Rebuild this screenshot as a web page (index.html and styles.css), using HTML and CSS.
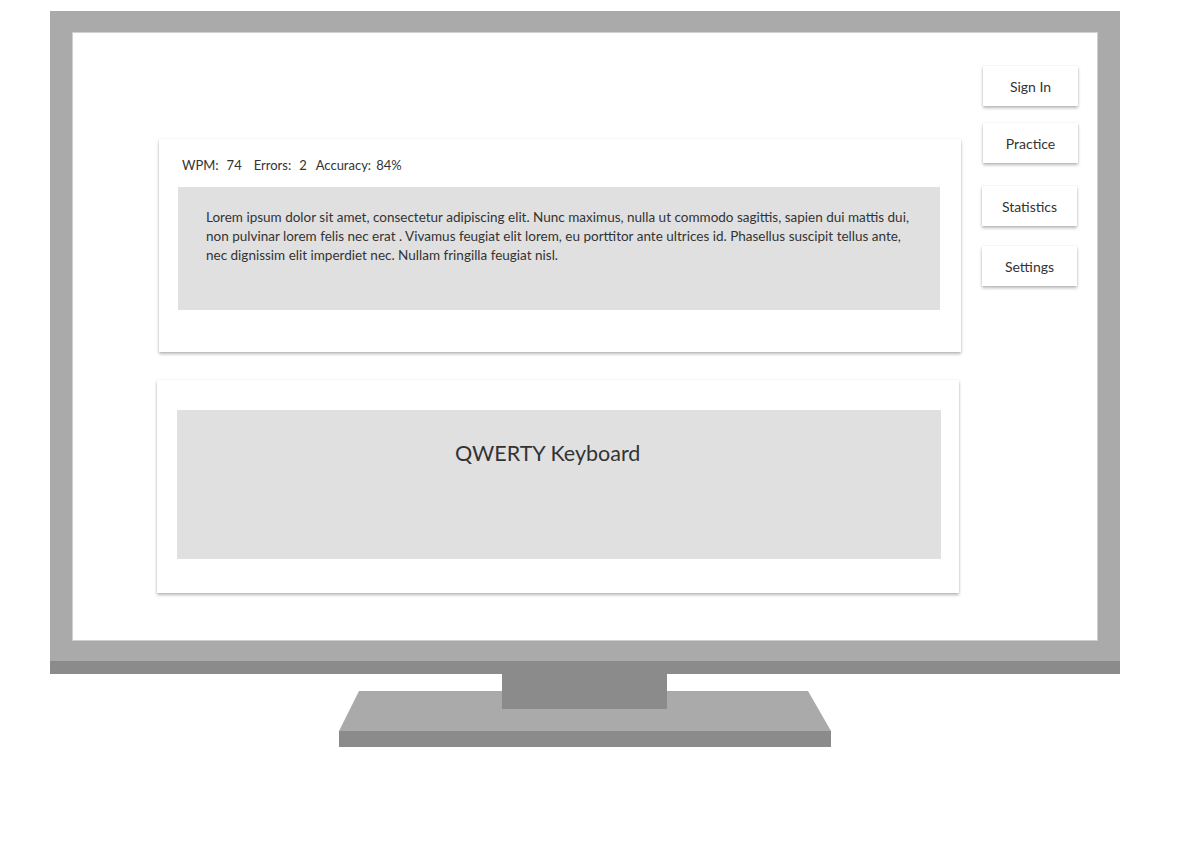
FILE: index.html
```html
<!DOCTYPE html>
<html>
<head>
<meta charset="utf-8">
<link rel="stylesheet" href="styles.css">
</head>
<body>
<div class="monitor">
  <div class="screen">
    <div class="main">
      <section class="card card-text">
        <div class="stats">
          <span class="label">WPM:</span><span class="value">74</span>
          <span class="label">Errors:</span><span class="value">2</span>
          <span class="label">Accuracy:</span><span class="value">84%</span>
        </div>
        <div class="passage">Lorem ipsum dolor sit amet, consectetur adipiscing elit. Nunc maximus, nulla ut commodo sagittis, sapien dui mattis dui, non pulvinar lorem felis nec erat . Vivamus feugiat elit lorem, eu porttitor ante ultrices id. Phasellus suscipit tellus ante, nec dignissim elit imperdiet nec. Nullam fringilla feugiat nisl.</div>
      </section>
      <section class="card card-keys">
        <div class="keyboard">QWERTY Keyboard</div>
      </section>
    </div>
    <nav class="nav">
      <div class="btn">Sign In</div>
      <div class="btn">Practice</div>
      <div class="btn">Statistics</div>
      <div class="btn">Settings</div>
    </nav>
  </div>
</div>
<svg class="stand" width="492" height="74" viewBox="0 0 492 74">
  <polygon points="20,17 469,17 492,57 0,57" fill="#aaaaaa"/>
  <rect x="0" y="57" width="492" height="16" fill="#8b8b8b"/>
  <rect x="163" y="0" width="165" height="35" fill="#8b8b8b"/>
</svg>
</body>
</html>
```
FILE: styles.css
```css
html, body {
  margin: 0;
  padding: 0;
  background: #ffffff;
  font-family: "Lato", "Liberation Sans", sans-serif;
  color: #333333;
}

.monitor {
  margin: 11px 0 0 50px;
  width: 1070px;
  box-sizing: border-box;
  background: #aaaaaa;
  padding: 22px 23px 21px 23px;
  border-bottom: 13px solid #8b8b8b;
}

.screen {
  height: 607px;
  background: #ffffff;
  box-shadow: 0 0 0 1px #cfcfcf;
  display: flex;
  align-items: flex-start;
}

.main {
  padding: 106px 0 0 84px;
  display: flex;
  flex-direction: column;
}

.card {
  background: #ffffff;
  width: 802px;
  box-sizing: border-box;
  box-shadow: 0 2px 3px rgba(0, 0, 0, 0.28), 0 0 2px rgba(0, 0, 0, 0.08);
}

.card-text {
  margin-left: 2px;
  height: 213px;
  padding: 17px 21px 0 19px;
}

.stats {
  display: flex;
  align-items: center;
  height: 18px;
  font-size: 13px;
  padding-left: 4px;
  margin-bottom: 13px;
}

.stats .label {
  margin-right: 8px;
}

.stats .label:nth-of-type(5) {
  margin-right: 5px;
}

.stats .value {
  margin-right: 12px;
}

.stats .value:nth-of-type(4) {
  margin-right: 9px;
}

.passage {
  background: #e0e0e0;
  height: 123px;
  box-sizing: border-box;
  padding: 21px 28px 0 28px;
  font-size: 13.5px;
  line-height: 19px;
}

.card-keys {
  margin-top: 28px;
  height: 213px;
  padding: 30px 18px 0 20px;
}

.keyboard {
  background: #e0e0e0;
  height: 149px;
  box-sizing: border-box;
  padding: 29px 0 0 278px;
  font-size: 21.5px;
  line-height: 28px;
}

.nav {
  display: flex;
  flex-direction: column;
  padding: 33px 0 0 22px;
}

.btn {
  width: 95px;
  height: 40px;
  box-sizing: border-box;
  display: flex;
  align-items: center;
  justify-content: center;
  background: #ffffff;
  font-size: 14px;
  box-shadow: 0 2px 3px rgba(0, 0, 0, 0.28), 0 0 2px rgba(0, 0, 0, 0.08);
}

.btn:nth-child(2) {
  margin-top: 17px;
}

.btn:nth-child(3) {
  margin-top: 23px;
  margin-left: -1px;
}

.btn:nth-child(4) {
  margin-top: 20px;
  margin-left: -1px;
}

.stand {
  display: block;
  margin-left: 339px;
}
```
